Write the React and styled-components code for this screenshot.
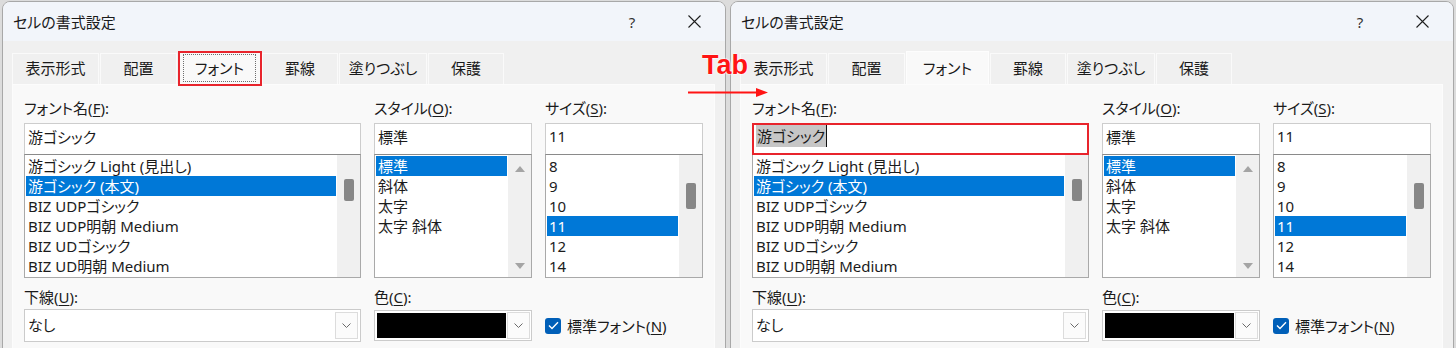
import React from 'react';
import styled, { createGlobalStyle } from 'styled-components';

const FONT = `"Noto Sans", "Noto Sans CJK JP", sans-serif`;

const GlobalStyle = createGlobalStyle`
  html, body { margin: 0; padding: 0; }
  body {
    background: #dcdcdc;
    font-family: ${FONT};
    color: #1b1b1b;
    font-feature-settings: "palt";
  }
`;

const Stage = styled.div`
  position: relative;
  width: 1456px;
  height: 348px;
  overflow: hidden;
  box-sizing: border-box;
  padding: 1px 0 0 2px;
  display: flex;
  gap: 4px;
`;

const Dialog = styled.div`
  flex-shrink: 0;
  width: 724px;
  height: 420px;
  box-sizing: border-box;
  border: 1px solid #a8a8a8;
  border-radius: 8px 8px 0 0;
  background: #f0f0f0;
  display: flex;
  flex-direction: column;
  overflow: hidden;
`;

const TitleBar = styled.div`
  height: 39px;
  flex-shrink: 0;
  background: #f2f5fa;
  display: flex;
  align-items: center;
  padding-left: 10px;
`;

const TitleText = styled.div`
  flex: 1;
  font-size: 15px;
  color: #1a1a1a;
  padding-bottom: 1px;
`;

const TitleButton = styled.div`
  width: 62px;
  height: 39px;
  display: flex;
  align-items: center;
  justify-content: center;
  font-size: 15px;
  color: #333;
`;

const Body = styled.div`
  flex: 1;
  display: flex;
  flex-direction: column;
  padding: 10px 10px 0 9px;
`;

const TabRow = styled.div`
  display: flex;
  align-items: flex-end;
  gap: 1px;
  height: 33px;
  position: relative;
  z-index: 1;
`;

const Tab = styled.div`
  position: relative;
  width: ${p => p.$w}px;
  height: ${p => (p.$active ? 33 : 31)}px;
  box-sizing: border-box;
  border: 1px solid ${p => (p.$active ? '#fdfdfd' : '#fafafa')};
  border-bottom: none;
  background: ${p => (p.$active ? '#f9f9f9' : '#f0f0f0')};
  display: flex;
  align-items: stretch;
  justify-content: center;
  padding: ${p => (p.$active ? '2px 4px 2px' : '0 0 2px')};
  font-size: 15px;
  text-align: center;
  ${p =>
    p.$annotated &&
    `&::after {
      content: '';
      position: absolute;
      left: -1px; top: -1px; right: -2px; bottom: -2px;
      border: 2px solid #e8242c;
      pointer-events: none;
    }`}
`;

const TabLabel = styled.span`
  flex: 1;
  display: flex;
  align-items: center;
  justify-content: center;
  padding-bottom: 2px;
  border: 1px dotted ${p => (p.$focus ? '#6e6e6e' : 'transparent')};
`;

const Panel = styled.div`
  flex: 1;
  background: #f9f9f9;
  border: 1px solid #fcfcfc;
  padding: 12px 11px 0 11px;
`;

const FormGrid = styled.div`
  display: grid;
  grid-template-columns: 337px 158px 158px;
  column-gap: 13px;
`;

const Label = styled.div`
  height: 22px;
  line-height: 22px;
  font-size: 15px;
  margin-top: ${p => p.$top || 0}px;
  white-space: nowrap;
`;

const Key = styled.span`
  text-decoration: underline;
  text-underline-offset: 2px;
`;

const Field = styled.div`
  position: relative;
  margin-top: 4px;
  height: 31px;
  box-sizing: border-box;
  border: 1px solid #cdcdcd;
  border-bottom: none;
  background: #ffffff;
  display: flex;
  align-items: center;
  padding: 0 0 6px 3px;
  font-size: 15px;
  ${p =>
    p.$annotated &&
    `&::after {
      content: '';
      position: absolute;
      left: -1px; top: -1px; right: -1px; bottom: -1px;
      border: 2px solid #e8242c;
      pointer-events: none;
    }`}
`;

const SelectedText = styled.span`
  background: #c6c6c6;
  line-height: 22px;
  padding: 0 1px;
  border-right: 1px solid #111;
`;

const ListBox = styled.div`
  height: 124px;
  box-sizing: border-box;
  border: 1px solid #a9a9a9;
  border-top-color: #8a8a8a;
  background: #ffffff;
  display: flex;
`;

const Items = styled.div`
  flex: 1;
  padding: 1px;
  overflow: hidden;
`;

const Item = styled.div`
  height: 20px;
  line-height: 20px;
  padding-left: 2px;
  font-size: 15px;
  white-space: nowrap;
  background: ${p => (p.$selected ? '#0078d7' : 'transparent')};
  color: ${p => (p.$selected ? '#ffffff' : '#1b1b1b')};
`;

const ScrollTrack = styled.div`
  width: 23px;
  background: #f0f0f0;
  display: flex;
  flex-direction: column;
  align-items: center;
  justify-content: ${p => (p.$arrows ? 'space-between' : 'flex-start')};
  padding: ${p => (p.$arrows ? '11px 0 8px' : `${p.$thumbTop}px 0 0`)};
  box-sizing: border-box;
`;

const Thumb = styled.div`
  width: 10px;
  height: ${p => p.$h}px;
  background: #878787;
  border-radius: 2px;
`;

const Arrow = styled.div`
  width: 0;
  height: 0;
  border-left: 5px solid transparent;
  border-right: 5px solid transparent;
  ${p => (p.$down ? 'border-top: 6px solid #a4a4a4;' : 'border-bottom: 6px solid #a4a4a4;')}
`;

const Combo = styled.div`
  margin-top: 1px;
  height: 33px;
  box-sizing: border-box;
  border: 1px solid #cbcbcb;
  background: #ffffff;
  display: flex;
  align-items: center;
  padding: 0 2px 0 3px;
  font-size: 15px;
`;

const ComboText = styled.div`
  flex: 1;
  padding-bottom: 2px;
`;

const ColorCombo = styled.div`
  margin-top: 1px;
  align-self: center;
  height: 31px;
  box-sizing: border-box;
  border: 1px solid #cbcbcb;
  background: #ffffff;
  display: flex;
  align-items: center;
  padding: 0 0 0 2px;
  gap: 1px;
`;

const Swatch = styled.div`
  width: 129px;
  height: 25px;
  background: ${p => p.$color};
`;

const DropButton = styled.div`
  width: 23px;
  height: 27px;
  box-sizing: border-box;
  border: 1px solid #dcdcdc;
  background: #fbfbfb;
  display: flex;
  align-items: center;
  justify-content: center;
`;

const CheckRow = styled.div`
  margin-top: 1px;
  align-self: center;
  display: flex;
  align-items: center;
  gap: 6px;
  font-size: 15px;
  white-space: nowrap;
`;

const CheckBox = styled.div`
  width: 16px;
  height: 16px;
  border-radius: 3px;
  background: #005fb8;
  display: flex;
  align-items: center;
  justify-content: center;
`;

const TabNote = styled.div`
  position: absolute;
  z-index: 5;
  left: 702px;
  top: 50px;
  font-family: "Liberation Sans", Arial, sans-serif;
  font-weight: bold;
  font-size: 27px;
  line-height: 30px;
  color: #ff1414;
  text-shadow: 0 0 2px #fff, 0 0 2px #fff, 0 0 1px #fff;
  pointer-events: none;
`;

const NoteArrow = styled.svg`
  position: absolute;
  z-index: 5;
  left: 686px;
  top: 85px;
  pointer-events: none;
`;

const Chevron = () => (
  <svg width="9" height="5" viewBox="0 0 9 5">
    <polyline points="0.5,0.5 4.5,4.5 8.5,0.5" fill="none" stroke="#6a6a6a" strokeWidth="1" />
  </svg>
);

const CloseIcon = () => (
  <svg width="13" height="13" viewBox="0 0 13 13">
    <path d="M0.5 0.5 L12.5 12.5 M12.5 0.5 L0.5 12.5" stroke="#1f1f1f" strokeWidth="1.1" />
  </svg>
);

const CheckIcon = () => (
  <svg width="11" height="9" viewBox="0 0 11 9">
    <polyline points="1,4.5 4,7.5 10,1.2" fill="none" stroke="#ffffff" strokeWidth="1.4" />
  </svg>
);

const tabs = [
  { label: '表示形式', w: 87 },
  { label: '配置', w: 77 },
  { label: 'フォント', w: 83, active: true },
  { label: '罫線', w: 76 },
  { label: '塗りつぶし', w: 88 },
  { label: '保護', w: 76 },
];

const fonts = [
  '游ゴシック Light (見出し)',
  '游ゴシック (本文)',
  'BIZ UDPゴシック',
  'BIZ UDP明朝 Medium',
  'BIZ UDゴシック',
  'BIZ UD明朝 Medium',
];
const styles = ['標準', '斜体', '太字', '太字 斜体'];
const sizes = ['8', '9', '10', '11', '12', '14'];

function FontDialog({ variant }) {
  const left = variant === 'left';
  return (
    <Dialog>
      <TitleBar>
        <TitleText>セルの書式設定</TitleText>
        <TitleButton>?</TitleButton>
        <TitleButton>
          <CloseIcon />
        </TitleButton>
      </TitleBar>
      <Body>
        <TabRow>
          {tabs.map(t => (
            <Tab key={t.label} $w={t.w} $active={t.active} $annotated={left && t.active}>
              <TabLabel $focus={left && t.active}>{t.label}</TabLabel>
            </Tab>
          ))}
        </TabRow>
        <Panel>
          <FormGrid>
            <Label>
              フォント名(<Key>F</Key>):
            </Label>
            <Label>
              スタイル(<Key>O</Key>):
            </Label>
            <Label>
              サイズ(<Key>S</Key>):
            </Label>

            <Field $annotated={!left}>
              {left ? '游ゴシック' : <SelectedText>游ゴシック</SelectedText>}
            </Field>
            <Field>標準</Field>
            <Field>11</Field>

            <ListBox>
              <Items>
                {fonts.map((f, i) => (
                  <Item key={f} $selected={i === 1}>
                    {f}
                  </Item>
                ))}
              </Items>
              <ScrollTrack $thumbTop={24}>
                <Thumb $h={22} />
              </ScrollTrack>
            </ListBox>
            <ListBox>
              <Items>
                {styles.map((s, i) => (
                  <Item key={s} $selected={i === 0}>
                    {s}
                  </Item>
                ))}
              </Items>
              <ScrollTrack $arrows>
                <Arrow />
                <Arrow $down />
              </ScrollTrack>
            </ListBox>
            <ListBox>
              <Items>
                {sizes.map((s, i) => (
                  <Item key={s} $selected={i === 3}>
                    {s}
                  </Item>
                ))}
              </Items>
              <ScrollTrack $thumbTop={28}>
                <Thumb $h={26} />
              </ScrollTrack>
            </ListBox>

            <Label $top={8}>
              下線(<Key>U</Key>):
            </Label>
            <Label $top={8}>
              色(<Key>C</Key>):
            </Label>
            <Label $top={8} />

            <Combo>
              <ComboText>なし</ComboText>
              <DropButton>
                <Chevron />
              </DropButton>
            </Combo>
            <ColorCombo>
              <Swatch $color="#000000" />
              <DropButton>
                <Chevron />
              </DropButton>
            </ColorCombo>
            <CheckRow>
              <CheckBox>
                <CheckIcon />
              </CheckBox>
              <span>
                標準フォント(<Key>N</Key>)
              </span>
            </CheckRow>
          </FormGrid>
        </Panel>
      </Body>
    </Dialog>
  );
}

export default function App() {
  return (
    <>
      <GlobalStyle />
      <Stage>
        <FontDialog variant="left" />
        <FontDialog variant="right" />
        <TabNote>Tab</TabNote>
        <NoteArrow width="84" height="15" viewBox="0 0 84 15">
          <line x1="2" y1="7.5" x2="72" y2="7.5" stroke="#ff1414" strokeWidth="2" />
          <polygon points="70,3 82,7.5 70,12" fill="#ff1414" />
        </NoteArrow>
      </Stage>
    </>
  );
}
